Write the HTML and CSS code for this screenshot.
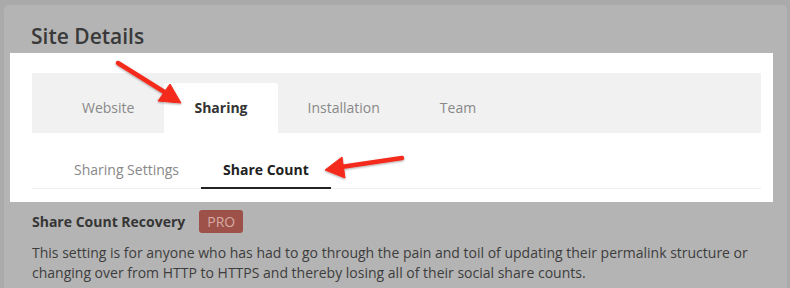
FILE: index.html
```html
<!DOCTYPE html>
<html lang="en">
<head>
  <meta charset="UTF-8">
  <meta name="viewport" content="width=device-width, initial-scale=1.0">
  <link rel="stylesheet" href="styles.css">
  <title>Site Details</title>
</head>
<body>

  <div class="card">
    <h2 class="card-title">Site Details</h2>

    <div class="destaque">
      <div class="abas">
        <a href="#" class="aba">Website</a>
        <a href="#" class="aba ativa">Sharing</a>
        <a href="#" class="aba">Installation</a>
        <a href="#" class="aba">Team</a>
      </div>

      <div class="subabas">
        <a href="#" class="subaba">Sharing Settings</a>
        <a href="#" class="subaba ativa">Share Count</a>
      </div>
    </div>

    <div class="conteudo">
      <div class="conteudo-titulo">
        <span>Share Count Recovery</span>
        <span class="selo">PRO</span>
      </div>
      <p class="conteudo-texto">This setting is for anyone who has had to go through the pain and toil of updating their permalink structure or changing over from HTTP to HTTPS and thereby losing all of their social share counts.</p>
    </div>
  </div>

  <!-- setas de destaque por cima da captura -->
  <svg class="setas" width="790" height="288" viewBox="0 0 790 288">
    <defs>
      <filter id="sombra" x="-20%" y="-20%" width="140%" height="140%">
        <feDropShadow dx="0" dy="1" stdDeviation="1.2" flood-color="#000" flood-opacity="0.35"/>
      </filter>
    </defs>
    <g filter="url(#sombra)" fill="#f42b1d" stroke="#f42b1d">
      <line x1="118" y1="63" x2="166" y2="93" stroke-width="4.5" stroke-linecap="round"/>
      <polygon points="181,103 170,84 158,101" stroke-width="1" stroke-linejoin="round"/>
      <line x1="341" y1="167" x2="402" y2="158" stroke-width="4.5" stroke-linecap="round"/>
      <polygon points="325,170 342,157 345,178" stroke-width="1" stroke-linejoin="round"/>
    </g>
  </svg>

</body>
</html>
```

FILE: styles.css
```css
body {
  font-family: 'Open Sans', 'Liberation Sans', sans-serif;
  margin: 0;
  padding: 0;
  background-color: #aaaaaa;
  position: relative;
  height: 288px;
  overflow: hidden;
}

.card {
  margin: 5px 3px 0 4px;
  background-color: #b4b4b4;
  border-radius: 5px 5px 0 0;
  height: 283px;
}

.card-title {
  margin: 0;
  padding: 17px 0 0 27px;
  font-size: 21px;
  font-weight: 600;
  line-height: 28px;
  color: #393939;
}

.destaque {
  background-color: #fff;
  margin: 3px 0 0 6px;
  width: 763px;
  height: 149px;
  padding: 20px 12px 0 22px;
  box-sizing: border-box;
}

.abas {
  display: flex;
  align-items: flex-end;
  height: 60px;
  padding-left: 20px;
  background-color: #f1f1f1;
}

.aba {
  display: block;
  padding: 0 30px;
  line-height: 50px;
  font-size: 14px;
  color: #888;
  text-decoration: none;
}

.aba.ativa {
  background-color: #fff;
  color: #333;
  font-weight: bold;
  border-radius: 3px 3px 0 0;
}

.subabas {
  display: flex;
  padding-left: 20px;
  margin-top: 16px;
  border-bottom: 1px solid #eeeeee;
}

.subaba {
  display: block;
  padding: 4px 22px 0;
  line-height: 34px;
  font-size: 14px;
  color: #888;
  text-decoration: none;
  border-bottom: 2px solid transparent;
  margin-bottom: -1px;
}

.subaba.ativa {
  color: #222;
  font-weight: bold;
  border-bottom-color: #222;
}

.conteudo {
  padding: 8px 28px 0;
  color: #3d3d3d;
}

.conteudo-titulo {
  display: flex;
  align-items: center;
  font-size: 14px;
  font-weight: bold;
  color: #363636;
}

.selo {
  margin-left: 14px;
  padding: 0 8px;
  line-height: 23px;
  border-radius: 3px;
  background-color: #9e5148;
  color: #d6aba5;
  font-weight: normal;
  font-size: 14px;
}

.conteudo-texto {
  margin: 10px 0 0;
  font-size: 14px;
  line-height: 20px;
}

.setas {
  position: absolute;
  top: 0;
  left: 0;
  pointer-events: none;
}
```
